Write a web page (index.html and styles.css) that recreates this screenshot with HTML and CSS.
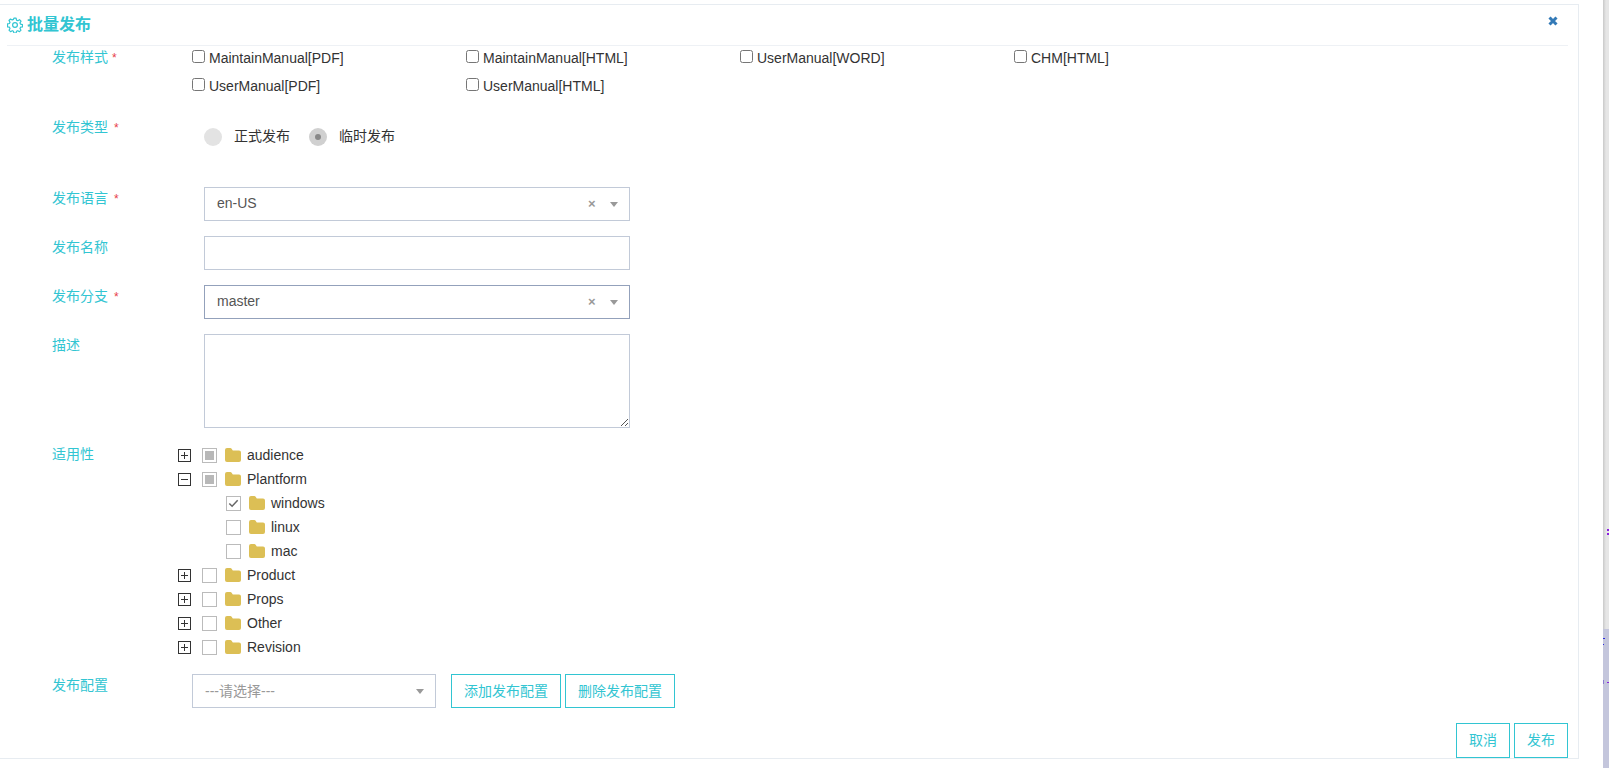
FILE: index.html
```html
<!DOCTYPE html>
<html lang="zh">
<head>
<meta charset="utf-8">
<title>批量发布</title>
<link rel="stylesheet" href="styles.css">
</head>
<body>
<div class="page">
  <section class="modal">
    <header class="modal-head">
      <h1 class="title">
        <svg class="gear" viewBox="0 0 16 16" width="16" height="16"><path d="M6.9 1.2h2.2l.4 1.9 1.3.6 1.7-1 1.5 1.5-1 1.7.6 1.3 1.9.4v2.2l-1.9.4-.6 1.3 1 1.7-1.5 1.5-1.7-1-1.3.6-.4 1.9H6.9l-.4-1.9-1.3-.6-1.7 1-1.5-1.5 1-1.7-.6-1.3-1.9-.4V6.9l1.9-.4.6-1.3-1-1.7 1.5-1.5 1.7 1 1.3-.6z" fill="none" stroke="currentColor" stroke-width="1.2" stroke-linejoin="round"/><circle cx="8" cy="8" r="2.4" fill="none" stroke="currentColor" stroke-width="1.2"/></svg>
        批量发布
      </h1>
      <svg class="close" viewBox="0 0 10 10" width="10" height="10"><path d="M1.5 1.5l7 7M8.5 1.5l-7 7" stroke="#337ab7" stroke-width="3"/></svg>
    </header>

    <form class="form">
      <div class="row row-style">
        <div class="label">发布样式 <i>*</i></div>
        <div class="checks">
          <label class="check"><input type="checkbox">MaintainManual[PDF]</label>
          <label class="check"><input type="checkbox">MaintainManual[HTML]</label>
          <label class="check"><input type="checkbox">UserManual[WORD]</label>
          <label class="check"><input type="checkbox">CHM[HTML]</label>
          <label class="check"><input type="checkbox">UserManual[PDF]</label>
          <label class="check"><input type="checkbox">UserManual[HTML]</label>
        </div>
      </div>

      <div class="row row-type">
        <div class="label">发布类型 <i class="gap">*</i></div>
        <div class="radios">
          <span class="radio"><b class="dot"></b>正式发布</span>
          <span class="radio"><b class="dot on"></b>临时发布</span>
        </div>
      </div>

      <div class="row row-field">
        <div class="label">发布语言 <i class="gap">*</i></div>
        <div class="select">
          <span class="value">en-US</span>
          <span class="clear">×</span><span class="caret"></span>
        </div>
      </div>
      <div class="row row-field">
        <div class="label">发布名称</div>
        <div class="input"></div>
      </div>
      <div class="row row-field">
        <div class="label">发布分支 <i class="gap">*</i></div>
        <div class="select focus">
          <span class="value">master</span>
          <span class="clear">×</span><span class="caret"></span>
        </div>
      </div>
      <div class="row row-field">
        <div class="label">描述</div>
        <div class="input area">
          <svg class="grip" viewBox="0 0 7 7" width="7" height="7"><path d="M0 7L7 0M4 7l3-3" stroke="#555" stroke-width="1"/></svg>
        </div>
      </div>

      <div class="row row-tree">
        <div class="label">适用性</div>
        <ul class="tree">
          <li class="node"><span class="tog plus"></span><span class="cb half"></span><svg class="folder" viewBox="0 0 16 14"><path d="M0 2a2 2 0 0 1 2-2h3.2c.8 0 1.2.4 1.6 1l1 1.4H14a2 2 0 0 1 2 2V12a2 2 0 0 1-2 2H2a2 2 0 0 1-2-2z"/></svg>audience</li>
          <li class="node"><span class="tog minus"></span><span class="cb half"></span><svg class="folder" viewBox="0 0 16 14"><path d="M0 2a2 2 0 0 1 2-2h3.2c.8 0 1.2.4 1.6 1l1 1.4H14a2 2 0 0 1 2 2V12a2 2 0 0 1-2 2H2a2 2 0 0 1-2-2z"/></svg>Plantform</li>
          <li class="node sub"><span class="cb"><svg viewBox="0 0 14 14" width="14" height="14"><path d="M2.5 7l3 3 6-6.5" fill="none" stroke="#666" stroke-width="1.6"/></svg></span><svg class="folder" viewBox="0 0 16 14"><path d="M0 2a2 2 0 0 1 2-2h3.2c.8 0 1.2.4 1.6 1l1 1.4H14a2 2 0 0 1 2 2V12a2 2 0 0 1-2 2H2a2 2 0 0 1-2-2z"/></svg>windows</li>
          <li class="node sub"><span class="cb"></span><svg class="folder" viewBox="0 0 16 14"><path d="M0 2a2 2 0 0 1 2-2h3.2c.8 0 1.2.4 1.6 1l1 1.4H14a2 2 0 0 1 2 2V12a2 2 0 0 1-2 2H2a2 2 0 0 1-2-2z"/></svg>linux</li>
          <li class="node sub"><span class="cb"></span><svg class="folder" viewBox="0 0 16 14"><path d="M0 2a2 2 0 0 1 2-2h3.2c.8 0 1.2.4 1.6 1l1 1.4H14a2 2 0 0 1 2 2V12a2 2 0 0 1-2 2H2a2 2 0 0 1-2-2z"/></svg>mac</li>
          <li class="node"><span class="tog plus"></span><span class="cb"></span><svg class="folder" viewBox="0 0 16 14"><path d="M0 2a2 2 0 0 1 2-2h3.2c.8 0 1.2.4 1.6 1l1 1.4H14a2 2 0 0 1 2 2V12a2 2 0 0 1-2 2H2a2 2 0 0 1-2-2z"/></svg>Product</li>
          <li class="node"><span class="tog plus"></span><span class="cb"></span><svg class="folder" viewBox="0 0 16 14"><path d="M0 2a2 2 0 0 1 2-2h3.2c.8 0 1.2.4 1.6 1l1 1.4H14a2 2 0 0 1 2 2V12a2 2 0 0 1-2 2H2a2 2 0 0 1-2-2z"/></svg>Props</li>
          <li class="node"><span class="tog plus"></span><span class="cb"></span><svg class="folder" viewBox="0 0 16 14"><path d="M0 2a2 2 0 0 1 2-2h3.2c.8 0 1.2.4 1.6 1l1 1.4H14a2 2 0 0 1 2 2V12a2 2 0 0 1-2 2H2a2 2 0 0 1-2-2z"/></svg>Other</li>
          <li class="node"><span class="tog plus"></span><span class="cb"></span><svg class="folder" viewBox="0 0 16 14"><path d="M0 2a2 2 0 0 1 2-2h3.2c.8 0 1.2.4 1.6 1l1 1.4H14a2 2 0 0 1 2 2V12a2 2 0 0 1-2 2H2a2 2 0 0 1-2-2z"/></svg>Revision</li>
        </ul>
      </div>

      <div class="row row-config">
        <div class="label">发布配置</div>
        <div class="select short">
          <span class="value muted">---请选择---</span>
          <span class="caret"></span>
        </div>
        <button type="button" class="btn add">添加发布配置</button>
        <button type="button" class="btn">删除发布配置</button>
      </div>
    </form>

    <footer class="modal-foot">
      <button type="button" class="btn foot">取消</button>
      <button type="button" class="btn foot">发布</button>
    </footer>
  </section>
  <aside class="strip">
    <div class="strip-low"></div>
    <span class="mark m1"></span>
    <span class="mark m2"></span>
    <span class="mark m3"></span>
    <span class="mark m4"></span>
    <span class="mark m5"></span>
    <span class="mark m6"></span>
  </aside>
</div>
</body>
</html>
```
FILE: styles.css
```css
* { box-sizing: border-box; }
html, body { margin: 0; height: 100%; background: #fff; overflow: hidden; }
body { font-family: "Liberation Sans", "Noto Sans CJK SC", sans-serif; font-size: 14px; color: #333; }
.page { display: flex; height: 768px; padding-top: 4px; }

.modal { width: 1579px; height: 755px; border-top: 1px solid #e7ecf1; border-right: 1px solid #e7ecf1; border-bottom: 1px solid #e7ecf1; display: flex; flex-direction: column; flex: none; }
.modal-head { height: 41px; margin: 0 10px 0 7px; padding-right: 10px; border-bottom: 1px solid #eef1f5; display: flex; justify-content: space-between; align-items: flex-start; flex: none; }
.title { margin: 9px 0 0; font-size: 16px; line-height: 22px; font-weight: 700; color: #32c5d2; display: flex; align-items: center; gap: 4px; }
.gear { color: #32c5d2; }
.close { margin-top: 11px; }

.form { flex: 1; display: flex; flex-direction: column; }
.row { display: flex; align-items: flex-start; padding-left: 52px; }
.label { color: #32c5d2; flex: none; width: 140px; line-height: 20px; }
.label i { color: #e73d4a; font-style: normal; font-size: 12px; }
.label i.gap { margin-left: 2px; }

.row-style { height: 69px; padding-top: 2px; }
.row-style .label { margin-top: -1px; }
.checks { display: grid; grid-template-columns: repeat(4, 274px); grid-auto-rows: 28px; }
.check { display: flex; align-items: center; height: 20px; }
.check input { width: 13px; height: 13px; margin: -3px 4px 0 0; }

.row-type { height: 72px; padding-top: 2px; }
.radios { display: flex; padding: 8px 0 0 12px; gap: 19px; }
.radio { display: flex; align-items: center; gap: 12px; height: 20px; }
.dot { width: 18px; height: 18px; margin-top: 4px; border-radius: 50%; background: #e3e3e3; display: flex; align-items: center; justify-content: center; }
.dot.on { background: #d0d0d0; }
.dot.on::after { content: ""; width: 6px; height: 6px; border-radius: 50%; background: #888; }

.row-field { margin-bottom: 15px; }
.row-field .label { width: 152px; line-height: 20px; margin-top: 1px; }
.select, .input { width: 426px; height: 34px; border: 1px solid #c2cad8; background: #fff; flex: none; display: flex; align-items: center; padding: 0 12px; }
.select { padding-bottom: 2px; }
.select.focus { border-color: #93a1bb; }
.value { flex: 1; color: #555; }
.value.muted { color: #999; }
.clear { color: #999; font-size: 13px; font-weight: 700; width: 18px; }
.caret { width: 0; height: 0; border-left: 4px solid transparent; border-right: 4px solid transparent; border-top: 5px solid #999; margin: 2px -1px 0 4px; }
.area { height: 94px; position: relative; }
.grip { position: absolute; right: 1px; bottom: 1px; }

.row-tree { height: 231px; }
.row-tree .label { width: 126px; margin-top: 1px; }
.tree { list-style: none; margin: 0; padding: 0; }
.node { display: flex; align-items: center; height: 24px; }
.node.sub { padding-left: 48px; }
.tog { width: 13px; height: 13px; border: 1px solid #333; margin-right: 11px; position: relative; flex: none; }
.tog::before { content: ""; position: absolute; left: 2px; right: 2px; top: 5px; height: 1px; background: #333; }
.tog.plus::after { content: ""; position: absolute; top: 2px; bottom: 2px; left: 5px; width: 1px; background: #333; }
.cb { width: 15px; height: 15px; border: 1px solid #bbb; margin-right: 8px; flex: none; position: relative; }
.cb svg { position: absolute; left: 0; top: 0; width: 13px; height: 13px; }
.cb.half::after { content: ""; position: absolute; inset: 2px; background: #b8b8b8; }
.folder { width: 16px; height: 14px; margin-right: 6px; fill: #dcbf55; flex: none; }

.row-config { height: 44px; }
.row-config .label { width: 140px; margin-top: 1px; }
.short { width: 244px; }
.btn { height: 34px; padding: 0 12px 3px; border: 1px solid #32c5d2; background: #fff; color: #32c5d2; font: inherit; }
.add { margin-left: 15px; margin-right: 4px; }

.modal-foot { display: flex; justify-content: flex-end; gap: 4px; padding-right: 10px; align-items: flex-end; flex: none; }
.foot { height: 35px; }

.strip { flex: 1; margin-left: 24px; margin-top: -4px; background: linear-gradient(to right, #c9c9c9, #e6e6e6 3px); display: flex; flex-direction: column; justify-content: flex-end; position: relative; }
.strip-low { height: 139px; background: #c4c6dc; }
.mark { position: absolute; height: 1px; background: #8a20e0; }
.m1 { right: 0; top: 529px; width: 2px; height: 2px; }
.m2 { right: 0; top: 533px; width: 2px; height: 2px; }
.m3 { left: 0; top: 638px; width: 2px; background: #2a2ae0; }
.m4 { left: 0; top: 644px; width: 1px; background: #2a2ae0; }
.m5 { left: 0; top: 680px; width: 1px; height: 4px; background: #8a7ad0; }
.m6 { right: 0; top: 682px; width: 2px; }
```
